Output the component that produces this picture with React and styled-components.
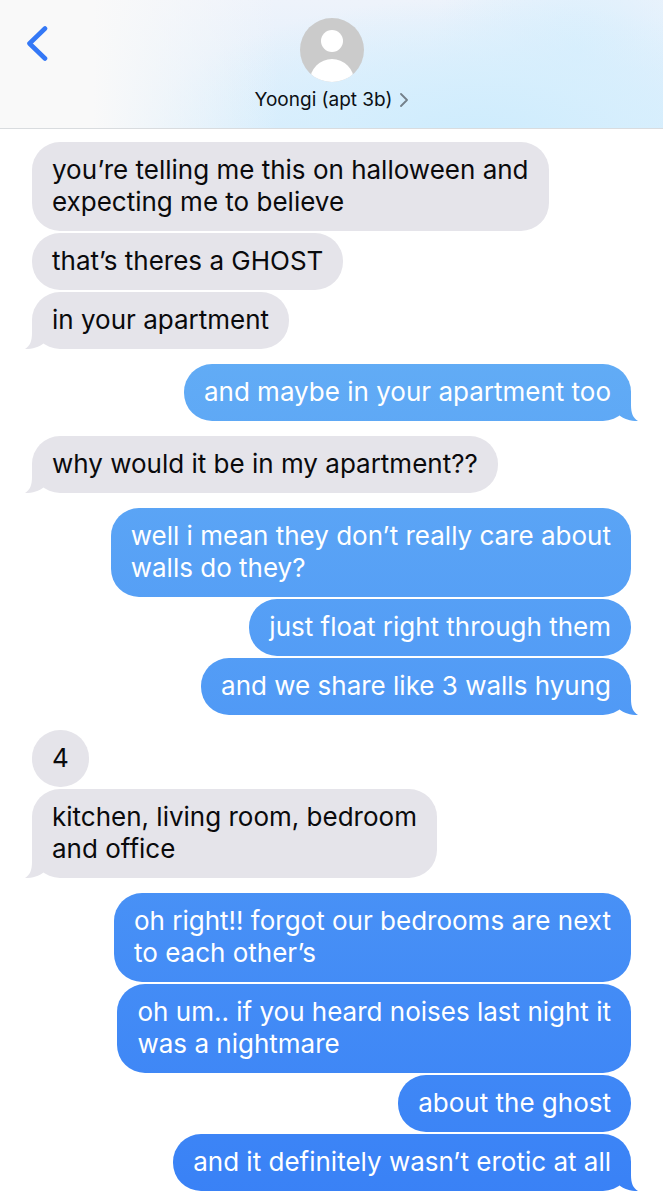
import React from "react";
import styled, { createGlobalStyle, css } from "styled-components";

const GlobalStyle = createGlobalStyle`
  *, *::before, *::after { box-sizing: border-box; }
  body {
    margin: 0;
    background: #fff;
    font-family: Inter, "Liberation Sans", sans-serif;
  }
`;

const Screen = styled.div`
  display: flex;
  flex-direction: column;
`;

const Header = styled.header`
  display: grid;
  grid-template-columns: 1fr auto 1fr;
  align-items: start;
  padding: 18px 24px 16px;
  border-bottom: 1px solid #d9dcdf;
  background:
    linear-gradient(90deg, #f9f9f9 14%, rgba(249, 249, 249, 0) 42%),
    radial-gradient(ellipse 50% 110% at 72% 108%, #ceecfd 0%, rgba(212, 238, 253, 0.8) 45%, rgba(225, 240, 253, 0) 100%),
    radial-gradient(ellipse 22% 110% at 87% 40%, #daeffd 0%, rgba(225, 240, 253, 0) 100%),
    linear-gradient(#eef3fb, #dceefc);
`;

const BackButton = styled.button`
  display: flex;
  justify-self: start;
  padding: 8px 0 0;
  border: 0;
  background: none;
  cursor: pointer;
`;

const ContactButton = styled.button`
  display: flex;
  flex-direction: column;
  align-items: center;
  gap: 6px;
  padding: 0;
  border: 0;
  background: none;
  color: #0b0f14;
  font-family: inherit;
  cursor: pointer;
`;

const ContactName = styled.span`
  display: flex;
  align-items: center;
  gap: 8px;
  font-size: 19px;
  line-height: 24px;
`;

const Thread = styled.main`
  display: flex;
  flex-direction: column;
  gap: 15px;
  padding: 13px 32px 8px;
`;

const Group = styled.section`
  display: flex;
  flex-direction: column;
  align-items: ${(p) => (p.$sent ? "flex-end" : "flex-start")};
  gap: 2px;
`;

const received = css`
  background: #e5e4ea;
`;

const sent = css`
  background: linear-gradient(#73bef5, #3981f6) fixed;
`;

const Bubble = styled.p`
  position: relative;
  margin: 0;
  padding: 12px 20px 13px;
  min-width: 57px;
  max-width: 92%;
  border-radius: 28px;
  color: ${(p) => (p.$sent ? "#fff" : "#0a0a0c")};
  font-size: 26px;
  line-height: 32px;
  white-space: pre-line;
  ${(p) => (p.$sent ? sent : received)}

  &:last-child::after {
    content: ${(p) => (p.$tail ? '""' : "none")};
    position: absolute;
    bottom: 0;
    ${(p) => (p.$sent ? "right: -7px;" : "left: -7px;")}
    width: 20px;
    height: 30px;
    ${(p) => (p.$sent ? sent : received)}
    clip-path: ${(p) =>
      p.$sent
        ? 'path("M13 0 V14 C13 22 15 27 20 30 C12 30 6 28 1 24 L0 10 Z")'
        : 'path("M7 0 V14 C7 22 5 27 0 30 C8 30 14 28 19 24 L20 10 Z")'};
  }
`;

const groups = [
  {
    messages: [
      "you’re telling me this on halloween and\nexpecting me to believe",
      "that’s theres a GHOST",
      "in your apartment",
    ],
  },
  { sent: true, messages: ["and maybe in your apartment too"] },
  { messages: ["why would it be in my apartment??"] },
  {
    sent: true,
    messages: [
      "well i mean they don’t really care about\nwalls do they?",
      "just float right through them",
      "and we share like 3 walls hyung",
    ],
  },
  { messages: ["4", "kitchen, living room, bedroom\nand office"] },
  {
    sent: true,
    messages: [
      "oh right!! forgot our bedrooms are next\nto each other’s",
      "oh um.. if you heard noises last night it\nwas a nightmare",
      "about the ghost",
      "and it definitely wasn’t erotic at all",
    ],
  },
];

function Avatar() {
  return (
    <svg width="64" height="64" viewBox="0 0 64 64" aria-hidden="true">
      <clipPath id="avatar">
        <circle cx="32" cy="32" r="32" />
      </clipPath>
      <g clipPath="url(#avatar)">
        <rect width="64" height="64" fill="#cbcbcb" />
        <circle cx="32" cy="23" r="11" fill="#fff" />
        <ellipse cx="32" cy="63" rx="22" ry="22" fill="#fff" />
      </g>
    </svg>
  );
}

export default function App() {
  return (
    <Screen>
      <GlobalStyle />
      <Header>
        <BackButton aria-label="Back">
          <svg width="26" height="36" viewBox="0 0 26 36" fill="none">
            <path d="M21 2.500 L5.500 17.500 L21 32.500" stroke="#3478f6" strokeWidth="4.600" strokeLinecap="round" strokeLinejoin="round" />
          </svg>
        </BackButton>
        <ContactButton>
          <Avatar />
          <ContactName>
            Yoongi (apt 3b)
            <svg width="8" height="14" viewBox="0 0 8 14" fill="none" aria-hidden="true">
              <path d="M1 1 L7 7 L1 13" stroke="#74808a" strokeWidth="1.800" strokeLinecap="round" strokeLinejoin="round" />
            </svg>
          </ContactName>
        </ContactButton>
      </Header>
      <Thread>
        {groups.map((group, g) => (
          <Group key={g} $sent={group.sent}>
            {group.messages.map((text, i) => (
              <Bubble key={i} $sent={group.sent} $tail={i === group.messages.length - 1}>
                {text}
              </Bubble>
            ))}
          </Group>
        ))}
      </Thread>
    </Screen>
  );
}
